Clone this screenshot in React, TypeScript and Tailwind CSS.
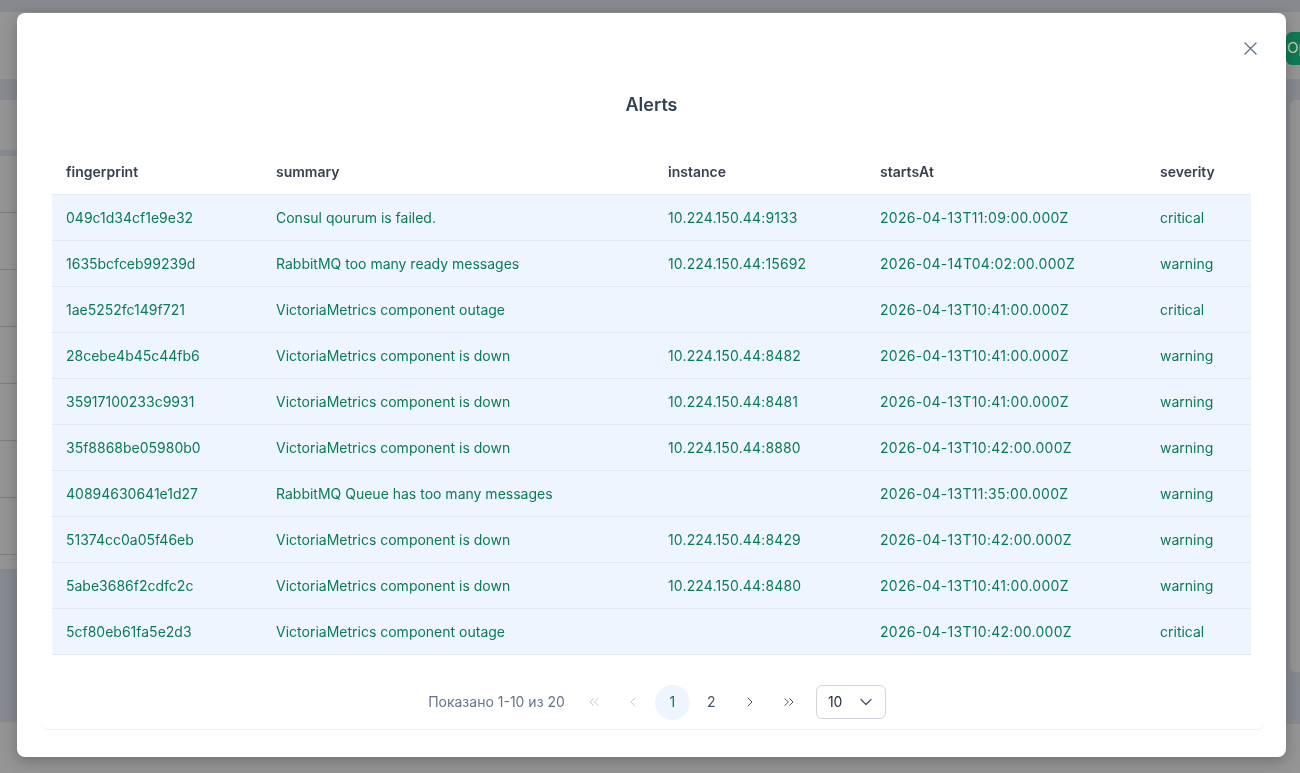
import { ChevronDown, ChevronLeft, ChevronRight, ChevronsLeft, ChevronsRight } from "lucide-react";

type Alert = {
  fingerprint: string;
  summary: string;
  instance: string;
  startsAt: string;
  severity: string;
};

const alerts: Alert[] = [
  { fingerprint: "049c1d34cf1e9e32", summary: "Consul qourum is failed.", instance: "10.224.150.44:9133", startsAt: "2026-04-13T11:09:00.000Z", severity: "critical" },
  { fingerprint: "1635bcfceb99239d", summary: "RabbitMQ too many ready messages", instance: "10.224.150.44:15692", startsAt: "2026-04-14T04:02:00.000Z", severity: "warning" },
  { fingerprint: "1ae5252fc149f721", summary: "VictoriaMetrics component outage", instance: "", startsAt: "2026-04-13T10:41:00.000Z", severity: "critical" },
  { fingerprint: "28cebe4b45c44fb6", summary: "VictoriaMetrics component is down", instance: "10.224.150.44:8482", startsAt: "2026-04-13T10:41:00.000Z", severity: "warning" },
  { fingerprint: "35917100233c9931", summary: "VictoriaMetrics component is down", instance: "10.224.150.44:8481", startsAt: "2026-04-13T10:41:00.000Z", severity: "warning" },
  { fingerprint: "35f8868be05980b0", summary: "VictoriaMetrics component is down", instance: "10.224.150.44:8880", startsAt: "2026-04-13T10:42:00.000Z", severity: "warning" },
  { fingerprint: "40894630641e1d27", summary: "RabbitMQ Queue has too many messages", instance: "", startsAt: "2026-04-13T11:35:00.000Z", severity: "warning" },
  { fingerprint: "51374cc0a05f46eb", summary: "VictoriaMetrics component is down", instance: "10.224.150.44:8429", startsAt: "2026-04-13T10:42:00.000Z", severity: "warning" },
  { fingerprint: "5abe3686f2cdfc2c", summary: "VictoriaMetrics component is down", instance: "10.224.150.44:8480", startsAt: "2026-04-13T10:41:00.000Z", severity: "warning" },
  { fingerprint: "5cf80eb61fa5e2d3", summary: "VictoriaMetrics component outage", instance: "", startsAt: "2026-04-13T10:42:00.000Z", severity: "critical" },
];

// dimmed page that sits behind the modal
const Backdrop = () => {
  const rows = [0, 1, 2, 3, 4, 5, 6];
  return (
    <div className="flex h-[773px] w-[1300px] flex-col overflow-hidden bg-[#959595]">
      <div className="h-[12px] shrink-0 bg-[#86898e]" />
      <div className="flex h-[67px] shrink-0 items-start justify-end pt-[20px]">
        <div className="mr-[-61px] flex h-[33px] w-[75px] items-center rounded-md bg-[#0e7a55] pl-[1px] text-[15px] text-[#d9c9a6]">
          Open
        </div>
      </div>
      <div className="flex h-[645px] shrink-0">
        <div className="flex flex-1 flex-col">
          <div className="h-[21px] bg-[#878a90]" />
          <div className="h-[50px]" />
          <div className="h-[6px] bg-[#878a90]" />
          {rows.map((r) => (
            <div key={r} className="h-[57px] border-b border-[#7e7e7e]" />
          ))}
          <div className="h-[14px]" />
          <div className="h-[153px] bg-[#878a90]" />
        </div>
        <div className="w-[14px] bg-[#878a90] pl-[4px] pt-[21px]">
          <div className="h-[572px] rounded-l-md bg-[#959595]" />
        </div>
      </div>
    </div>
  );
};

const PageButton = ({ children, active, muted }: { children: React.ReactNode; active?: boolean; muted?: boolean }) => (
  <button
    className={
      "flex h-[35px] w-[35px] items-center justify-center rounded-full text-sm " +
      (active ? "bg-[#eef5fe] text-[#0b7a57]" : muted ? "text-[#c3c9d2]" : "text-[#475569]")
    }
  >
    {children}
  </button>
);

export default function App() {
  return (
    <div className="relative font-['Inter',sans-serif]">
      <Backdrop />

      <div className="fixed inset-0 pl-[17px] pt-[13px]">
        <div className="relative h-[744px] w-[1269px] rounded-lg bg-white shadow-[0_4px_16px_rgba(0,0,0,0.25)]">
          <button className="absolute right-[29px] top-[29px] text-[#64748b]">
            <svg width="13" height="13" viewBox="0 0 13 13" fill="none" stroke="currentColor" strokeWidth="1.4" strokeLinecap="round">
              <path d="M1 1 12 12M12 1 1 12" />
            </svg>
          </button>

          <h2 className="pt-[78px] text-center text-lg leading-7 font-semibold text-[#334155]">Alerts</h2>

          <div className="mx-[23px] mt-[31px] w-[1225px] rounded-b-lg border-b border-[#eef0f3] px-3 pb-[9px]">
            <table className="w-[1199px] table-fixed border-collapse text-left text-sm">
              <thead>
                <tr className="h-[44px] border-b border-[#e2e8f0] text-[#374151]">
                  <th className="w-[210px] pl-[14px] font-semibold">fingerprint</th>
                  <th className="w-[392px] pl-[14px] font-semibold">summary</th>
                  <th className="w-[212px] pl-[14px] font-semibold">instance</th>
                  <th className="w-[280px] pl-[14px] font-semibold">startsAt</th>
                  <th className="w-[105px] pl-[14px] font-semibold">severity</th>
                </tr>
              </thead>
              <tbody>
                {alerts.map((a) => (
                  <tr key={a.fingerprint} className="h-[46px] border-b border-[#e2e8f0] bg-[#eff5fe] text-[#0b7a57]">
                    <td className="pl-[14px] pt-[2px]">{a.fingerprint}</td>
                    <td className="pl-[14px] pt-[2px]">{a.summary}</td>
                    <td className="pl-[14px] pt-[2px] tracking-[0.15px]">{a.instance}</td>
                    <td className="pl-[14px] pt-[2px] tracking-[0.28px]">{a.startsAt}</td>
                    <td className="pl-[14px] pt-[2px]">{a.severity}</td>
                  </tr>
                ))}
              </tbody>
            </table>

            <div className="mt-[30px] flex items-center justify-center pl-[9px]">
              <span className="mr-[12px] text-sm text-[#64748b]">Показано 1-10 из 20</span>
              <div className="flex gap-[4px]">
                <PageButton muted>
                  <ChevronsLeft size={16} strokeWidth={1.5} />
                </PageButton>
                <PageButton muted>
                  <ChevronLeft size={16} strokeWidth={1.5} />
                </PageButton>
                <PageButton active>1</PageButton>
                <PageButton>2</PageButton>
                <PageButton>
                  <ChevronRight size={16} strokeWidth={1.5} />
                </PageButton>
                <PageButton>
                  <ChevronsRight size={16} strokeWidth={1.5} />
                </PageButton>
              </div>
              <div className="ml-[9px] flex h-[34px] w-[70px] items-center justify-between rounded-md border border-[#d1d5db] pl-[11px] pr-[9px] text-sm text-[#1f2937]">
                <span>10</span>
                <ChevronDown size={20} strokeWidth={1.5} className="text-[#475569]" />
              </div>
            </div>
          </div>
        </div>
      </div>
    </div>
  );
}
